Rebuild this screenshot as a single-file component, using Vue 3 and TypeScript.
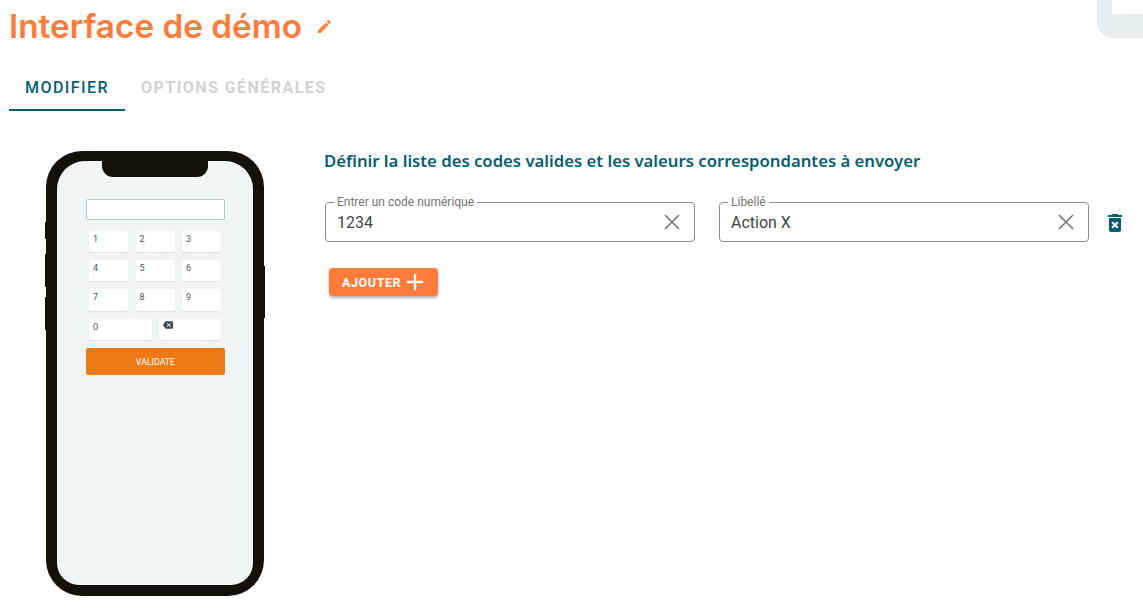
<template>
  <div class="page">
    <div class="corner"></div>

    <header class="title-row">
      <h1 class="title">Interface de démo</h1>
      <svg class="pencil" viewBox="0 0 24 24" width="17" height="17">
        <path d="M3 17.25V21h3.75L17.81 9.94l-3.75-3.75L3 17.25zM20.71 7.04a1 1 0 0 0 0-1.41l-2.34-2.34a1 1 0 0 0-1.41 0l-1.83 1.83 3.75 3.75 1.83-1.83z" />
      </svg>
    </header>

    <nav class="tabs">
      <div class="tab active">MODIFIER</div>
      <div class="tab">OPTIONS GÉNÉRALES</div>
    </nav>

    <main class="content">
      <div class="phone">
        <span class="side left-1"></span>
        <span class="side left-2"></span>
        <span class="side left-3"></span>
        <span class="side right-1"></span>
        <div class="screen">
          <div class="notch"></div>
          <div class="code-input"></div>
          <div class="keypad">
            <div v-for="k in digits" :key="k" class="key">{{ k }}</div>
          </div>
          <div class="keypad-bottom">
            <div class="key">0</div>
            <div class="key">
              <svg viewBox="0 0 24 24" width="10" height="10">
                <path fill="#3d4a52" d="M22 3H7c-.69 0-1.23.35-1.59.88L0 12l5.41 8.11c.36.53.9.89 1.59.89h15c1.1 0 2-.9 2-2V5c0-1.1-.9-2-2-2zm-3 12.59L17.59 17 14 13.41 10.41 17 9 15.59 12.59 12 9 8.41 10.41 7 14 10.59 17.59 7 19 8.41 15.41 12 19 15.59z" />
              </svg>
            </div>
          </div>
          <div class="validate">VALIDATE</div>
        </div>
      </div>

      <section class="form">
        <h2 class="form-title">Définir la liste des codes valides et les valeurs correspondantes à envoyer</h2>
        <div class="fields">
          <div v-for="f in fields" :key="f.label" class="field">
            <span class="field-label">{{ f.label }}</span>
            <span class="field-value">{{ f.value }}</span>
            <svg class="clear" viewBox="0 0 24 24" width="24" height="24">
              <path d="M5 5l14 14M19 5L5 19" />
            </svg>
          </div>
          <svg class="trash" viewBox="0 0 24 24" width="24" height="24">
            <path d="M6 19c0 1.1.9 2 2 2h8c1.1 0 2-.9 2-2V7H6v12zm2.46-7.12 1.41-1.41L12 12.59l2.12-2.12 1.41 1.41L13.41 14l2.12 2.12-1.41 1.41L12 15.41l-2.12 2.12-1.41-1.41L10.59 14l-2.13-2.12zM15.5 4l-1-1h-5l-1 1H5v2h14V4z" />
          </svg>
        </div>
        <button class="add" type="button">
          AJOUTER
          <svg viewBox="0 0 24 24" width="28" height="28">
            <path d="M19 13h-6v6h-2v-6H5v-2h6V5h2v6h6v2z" />
          </svg>
        </button>
      </section>
    </main>
  </div>
</template>

<script setup lang="ts">
interface Field {
  label: string
  value: string
}

const digits: string[] = ['1', '2', '3', '4', '5', '6', '7', '8', '9']

const fields: Field[] = [
  { label: 'Entrer un code numérique', value: '1234' },
  { label: 'Libellé', value: 'Action X' },
]
</script>

<style>
html,
body {
  margin: 0;
  background: #fff;
}
</style>

<style scoped>
.page {
  position: relative;
  width: 1143px;
  height: 616px;
  overflow: hidden;
  box-sizing: border-box;
  padding: 0 0 0 9px;
  font-family: Roboto, sans-serif;
}
.corner {
  position: absolute;
  top: -10px;
  right: -20px;
  width: 51px;
  height: 24px;
  border-left: 15px solid #e6eef1;
  border-bottom: 24px solid #e6eef1;
  border-bottom-left-radius: 16px;
}
.title-row {
  display: flex;
  align-items: center;
  height: 52px;
}
.title {
  margin: 0;
  font-family: Inter, sans-serif;
  font-size: 33.3px;
  font-weight: 600;
  line-height: 52px;
  color: #ff7b3c;
}
.pencil {
  margin-left: 14px;
  fill: #ff7b3c;
}
.tabs {
  display: flex;
  margin-top: 11px;
}
.tab {
  padding: 2px 16px 0;
  height: 48px;
  line-height: 46px;
  box-sizing: border-box;
  font-size: 16px;
  font-weight: 700;
  letter-spacing: 1.45px;
  color: #d2d2d2;
}
.tab.active {
  font-weight: 500;
  color: #045f72;
  border-bottom: 2px solid #045f72;
}
.content {
  display: flex;
  align-items: flex-start;
  margin-top: 40px;
  padding-left: 37px;
}
.phone {
  position: relative;
  flex: none;
  width: 218px;
  height: 445px;
  box-sizing: border-box;
  padding: 10px 11px 11px;
  background: #14110b;
  border-radius: 36px;
}
.side {
  position: absolute;
  width: 2px;
  background: #14110b;
}
.left-1 {
  left: -1px;
  top: 71px;
  height: 17px;
}
.left-2 {
  left: -1px;
  top: 103px;
  height: 33px;
}
.left-3 {
  left: -1px;
  top: 146px;
  height: 33px;
}
.right-1 {
  right: -1px;
  top: 115px;
  height: 52px;
}
.screen {
  position: relative;
  height: 100%;
  box-sizing: border-box;
  padding: 38px 28px 0 29px;
  background: #f1f4f5;
  border-radius: 28px 28px 22px 22px;
}
.notch {
  position: absolute;
  top: -1px;
  left: 45px;
  width: 106px;
  height: 17px;
  background: #14110b;
  border-radius: 0 0 11px 11px;
}
.code-input {
  height: 21px;
  box-sizing: border-box;
  background: #fff;
  border: 1px solid #a4cfcf;
  border-radius: 2px;
}
.keypad {
  display: grid;
  grid-template-columns: repeat(3, 39px);
  grid-template-rows: 21px 21px 22px;
  justify-content: space-between;
  gap: 8px 7px;
  margin: 11px 4px 0 3px;
}
.keypad-bottom {
  display: grid;
  grid-template-columns: 63px 62px;
  justify-content: space-between;
  grid-auto-rows: 21px;
  margin: 8px 4px 0 3px;
}
.key {
  box-sizing: border-box;
  padding: 2px 4px;
  font-size: 9px;
  line-height: 12px;
  color: #4a5560;
  background: #fff;
  border-radius: 2px;
  box-shadow: 0 1px 1px #dbe2e6;
}
.key svg {
  display: block;
  margin-top: -1px;
}
.validate {
  margin-top: 8px;
  height: 27px;
  line-height: 28px;
  text-align: center;
  font-size: 8.8px;
  color: #fff;
  background: #ee7a16;
  border-radius: 2px;
}
.form {
  margin-left: 61px;
  flex: 1;
}
.form-title {
  margin: -1px 0 0 -1px;
  font-family: 'Noto Sans', sans-serif;
  font-size: 16.7px;
  font-weight: 600;
  line-height: 22px;
  color: #045f72;
}
.fields {
  display: flex;
  align-items: center;
  gap: 24px;
  margin-top: 30px;
}
.field {
  position: relative;
  display: flex;
  align-items: center;
  justify-content: space-between;
  width: 370px;
  height: 40px;
  box-sizing: border-box;
  padding: 0 4px 0 11px;
  border: 1px solid #8c8c8c;
  border-radius: 4px;
}
.field-label {
  position: absolute;
  top: -7px;
  left: 8px;
  padding: 0 3px;
  font-size: 12px;
  line-height: 13px;
  color: #757575;
  background: #fff;
}
.field-value {
  font-size: 16px;
  color: #444;
}
.clear {
  margin-right: 6px;
  fill: none;
  stroke: #757575;
  stroke-width: 1.6;
}
.trash {
  margin: 2px 0 0 -10px;
  fill: #045f72;
}
.add {
  display: flex;
  align-items: center;
  height: 28px;
  margin: 26px 0 0 4px;
  padding: 0 9px 0 13px;
  border: 0;
  border-radius: 4px;
  font-family: Roboto, sans-serif;
  font-size: 12.5px;
  font-weight: 700;
  letter-spacing: 0.6px;
  color: #fff;
  background: #ff7b3c;
  box-shadow: 0 2px 3px rgba(0, 0, 0, 0.3);
}
.add svg {
  flex: none;
  fill: #fff;
}
</style>
